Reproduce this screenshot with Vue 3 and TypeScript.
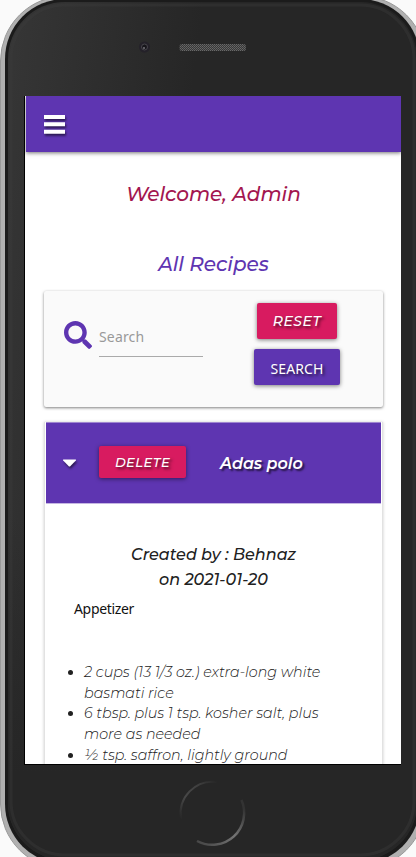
<script setup lang="ts">
import { ref } from 'vue'

interface Recipe {
  title: string
  author: string
  date: string
  category: string
  ingredients: string[][]
}

const query = ref('')
const recipe: Recipe = {
  title: 'Adas polo',
  author: 'Behnaz',
  date: '2021-01-20',
  category: 'Appetizer',
  ingredients: [
    ['2 cups (13 1/3 oz.) extra-long white', 'basmati rice'],
    ['6 tbsp. plus 1 tsp. kosher salt, plus', 'more as needed'],
    ['½ tsp. saffron, lightly ground'],
  ],
}
</script>

<template>
  <div class="stage">
    <svg class="device" width="416" height="857" viewBox="0 0 416 857" aria-hidden="true">
      <defs>
        <linearGradient id="body" x1="0" y1="0" x2="1" y2="0.25">
          <stop offset="0" stop-color="#363636" />
          <stop offset="0.45" stop-color="#262626" />
          <stop offset="1" stop-color="#262626" />
        </linearGradient>
        <linearGradient id="fade" x1="0" y1="0" x2="0" y2="1">
          <stop offset="0.6" stop-color="#262626" stop-opacity="0" />
          <stop offset="0.9" stop-color="#262626" />
        </linearGradient>
        <linearGradient id="ringA" x1="0" y1="1" x2="1" y2="0">
          <stop offset="0" stop-color="#262626" />
          <stop offset="0.35" stop-color="#484848" />
          <stop offset="0.7" stop-color="#404040" />
          <stop offset="1" stop-color="#262626" />
        </linearGradient>
        <linearGradient id="ringB" x1="1" y1="0" x2="0" y2="1">
          <stop offset="0.1" stop-color="#333" />
          <stop offset="0.5" stop-color="#747474" />
          <stop offset="1" stop-color="#444" />
        </linearGradient>
        <pattern id="mesh" width="2" height="2" patternUnits="userSpaceOnUse">
          <rect width="2" height="2" fill="#383838" />
          <rect width="1" height="1" fill="#686868" />
          <rect x="1" y="1" width="1" height="1" fill="#5d5d5d" />
        </pattern>
      </defs>
      <rect x="0.5" y="-4" width="425" height="873" rx="65" fill="#b0b0b0" stroke="#999" />
      <rect x="5" y="-1" width="415" height="865" rx="60" fill="#1b1b1b" />
      <rect x="8" y="2" width="409" height="858" rx="57" fill="url(#body)" />
      <rect x="8" y="2" width="409" height="858" rx="57" fill="url(#fade)" />
      <rect x="11" y="5" width="403" height="850" rx="54" fill="none" stroke="#3b3b3b" stroke-width="3" opacity="0.4" />
      <circle cx="144.500" cy="47" r="5.500" fill="#242129" />
      <circle cx="144.500" cy="47" r="3" fill="#17161b" stroke="#48464c" />
      <circle cx="144" cy="48" r="1" fill="#77757b" />
      <rect x="179.500" y="44" width="66.500" height="7" rx="2.500" fill="url(#mesh)" />
      <path d="M181 819A32 32 0 0 1 217 782" fill="none" stroke="url(#ringA)" stroke-width="2" />
      <path d="M241.500 800A32 32 0 0 1 197 841" fill="none" stroke="url(#ringB)" stroke-width="2.500" />
    </svg>

    <main class="screen">
      <header class="navbar">
        <svg class="bars" width="24" height="24" viewBox="0 0 24 24" aria-label="Menu">
          <path d="M1 3h21v4H1zM1 10.200h21v4H1zM1 17.700h21v4H1z" fill="#fff" />
        </svg>
      </header>

      <h1 class="welcome">Welcome, Admin</h1>
      <h2 class="heading">All Recipes</h2>

      <form class="search-panel" @submit.prevent>
        <div class="field">
          <svg width="28" height="28" viewBox="0 0 512 512" aria-hidden="true">
            <path fill="#5e35b1" d="M505 442.700L405.300 343c-4.500-4.500-10.600-7-17-7H372c27.600-35.300 44-79.700 44-128C416 93.100 322.900 0 208 0S0 93.100 0 208s93.100 208 208 208c48.300 0 92.700-16.400 128-44v16.300c0 6.400 2.500 12.500 7 17l99.700 99.700c9.400 9.400 24.600 9.400 33.900 0l28.300-28.300c9.400-9.400 9.400-24.600.1-34zM208 336c-70.700 0-128-57.200-128-128 0-70.700 57.200-128 128-128 70.700 0 128 57.200 128 128 0 70.700-57.200 128-128 128z" />
          </svg>
          <input v-model="query" class="input" type="text" placeholder="Search" />
        </div>
        <div class="actions">
          <button type="button" class="btn reset">RESET</button>
          <button type="submit" class="btn search">SEARCH</button>
        </div>
      </form>

      <article class="recipe">
        <div class="recipe-header">
          <svg class="caret" width="15" height="9" viewBox="0 0 15 9" aria-hidden="true">
            <path d="M1.500 .5h12q1 0 .3 1L8.500 7q-1 1-2 0L1.200 1.500Q.5 .5 1.500 .5z" fill="#fff" />
          </svg>
          <button type="button" class="btn delete">DELETE</button>
          <span class="title">{{ recipe.title }}</span>
        </div>
        <div class="recipe-body">
          <p class="created">
            Created by : {{ recipe.author }}<br />
            on {{ recipe.date }}
          </p>
          <p class="category">{{ recipe.category }}</p>
          <ul class="ingredients">
            <li v-for="(item, i) in recipe.ingredients" :key="i">
              <span v-for="line in item" :key="line" class="line">{{ line }}</span>
            </li>
          </ul>
        </div>
      </article>
    </main>
  </div>
</template>

<style>
body {
  margin: 0;
  background: #fafafa;
}
</style>

<style scoped>
.stage {
  position: relative;
  box-sizing: border-box;
  width: 416px;
  height: 857px;
  padding: 96px 0 0 24px;
  overflow: hidden;
  background: #fafafa;
  font-family: Montserrat, Inter, "Liberation Sans", sans-serif;
}

.device {
  position: absolute;
  inset: 0;
}

.screen {
  position: relative;
  box-sizing: border-box;
  width: 377px;
  height: 669px;
  overflow: hidden;
  padding-left: 1px;
  border-left: 1px solid #000;
  border-bottom: 1px solid #000;
  background: #fff;
}

.navbar {
  display: flex;
  align-items: center;
  box-sizing: border-box;
  height: 56px;
  padding-left: 17px;
  background: #5e35b1;
  box-shadow: 0 1px 4px rgba(0, 0, 0, 0.55);
}

.bars,
.caret {
  overflow: visible;
  filter: drop-shadow(1px 2px 1px rgba(0, 0, 0, 0.55));
}

.welcome,
.heading {
  margin: 0;
  font-size: 20px;
  line-height: 28px;
  font-style: italic;
  font-weight: 500;
  text-align: center;
}

.welcome {
  margin-top: 28px;
  color: #a3164f;
}

.heading {
  margin-top: 42px;
  color: #5e35b1;
}

.search-panel {
  display: flex;
  box-sizing: border-box;
  width: 339px;
  height: 116px;
  margin: 13px 0 0 18px;
  padding: 12px 0 0 20px;
  border-radius: 2px;
  background: #fafafa;
  box-shadow: 0 1px 3px rgba(0, 0, 0, 0.5);
}

.field {
  display: flex;
  gap: 7px;
  width: 178px;
  padding-top: 18px;
}

.input {
  box-sizing: border-box;
  width: 104px;
  height: 36px;
  padding: 0 0 5px;
  border: 0;
  border-bottom: 1px solid #aaa;
  outline: 0;
  background: transparent;
  color: #222;
  font: 14px "Noto Sans", sans-serif;
  letter-spacing: 0.15px;
}

.input::placeholder {
  color: #999;
  opacity: 1;
}

.actions {
  display: flex;
  flex-direction: column;
  align-items: center;
  gap: 10px;
  width: 110px;
}

.btn {
  box-sizing: border-box;
  height: 36px;
  padding: 0;
  border: 0;
  border-radius: 2px;
  background: #d81b60;
  color: #fff;
  box-shadow: 0 1px 4px rgba(0, 0, 0, 0.5);
  font: italic 500 14px/36px Montserrat, Inter, sans-serif;
  letter-spacing: 0.5px;
  text-shadow: 2px 2px 3px rgba(0, 0, 0, 0.65);
}

.reset {
  width: 80px;
}

.search {
  width: 86px;
  background: #5e35b1;
  font: 14px/40px "Noto Sans", sans-serif;
  letter-spacing: 0.15px;
}

.recipe {
  box-sizing: border-box;
  width: 339px;
  height: 500px;
  margin: 15px 0 0 18px;
  padding: 0 1px;
  border: 1px solid #e2e2e2;
  border-top: 0;
  box-shadow: 0 0 3px rgba(0, 0, 0, 0.2);
}

.recipe-header {
  display: flex;
  align-items: center;
  box-sizing: border-box;
  width: 335px;
  height: 82px;
  padding-left: 16px;
  border-top: 1px solid #9f86d0;
  border-bottom: 1px solid #c5b6e2;
  background: #5e35b1;
}

.delete {
  width: 87px;
  height: 32px;
  margin: -2px 0 0 22px;
  font-size: 13px;
  line-height: 32px;
}

.title {
  margin-left: 34px;
  color: #fff;
  font-size: 16px;
  font-style: italic;
  font-weight: 600;
  text-shadow: 2px 2px 2px rgba(0, 0, 0, 0.65);
}

.recipe-body {
  padding: 38px 28px 0;
  color: #212121;
}

.created {
  margin: 0;
  font-size: 16px;
  line-height: 25px;
  font-style: italic;
  font-weight: 500;
  text-align: center;
}

.category {
  margin: 7px 0 0;
  color: #111;
  font: 14px/20px "Noto Sans", sans-serif;
  letter-spacing: -0.33px;
}

.ingredients {
  margin: 43px 0 0;
  padding-left: 10px;
  font-size: 14.300px;
  line-height: 20.650px;
  font-style: italic;
  font-weight: 300;
}

.line {
  display: block;
  white-space: nowrap;
}
</style>
